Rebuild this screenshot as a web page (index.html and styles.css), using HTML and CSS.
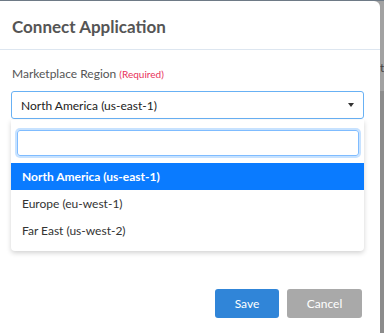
FILE: index.html
```html
<!DOCTYPE html>
<html lang="en">
<head>
    <meta charset="UTF-8">
    <meta name="viewport" content="width=device-width, initial-scale=1.0">
    <title>Connect Application</title>
    <link rel="stylesheet" href="styles.css">
</head>
<body>
    <div id="backdrop">
        <div class="backdrop-top"><span class="backdrop-text">t</span></div>
    </div>
    <div id="modal">
        <div class="modal-header">Connect Application</div>
        <div class="modal-body">
            <div class="field-label">Marketplace Region <span class="required">(Required)</span></div>
            <div class="select-wrap">
                <div class="select-box">
                    <span>North America (us-east-1)</span>
                    <span class="caret"></span>
                </div>
                <div class="dropdown">
                    <div class="search-box"></div>
                    <div class="option selected">North America (us-east-1)</div>
                    <div class="option">Europe (eu-west-1)</div>
                    <div class="option">Far East (us-west-2)</div>
                </div>
            </div>
        </div>
        <div class="modal-footer">
            <button class="btn btn-save">Save</button>
            <button class="btn btn-cancel">Cancel</button>
        </div>
    </div>
</body>
</html>
```

FILE: styles.css
```css
body {
    margin: 0;
    background-color: #8c8c8c;
    font-family: Lato, "Open Sans", sans-serif;
    width: 384px;
    height: 333px;
    overflow: hidden;
    position: relative;
}
#backdrop {
    position: absolute;
    top: 0;
    left: 0;
    width: 384px;
    height: 333px;
}
.backdrop-top {
    height: 90px;
    background-color: #a2a2a2;
    border-top: 1px solid #6e7a86;
}
.backdrop-text {
    position: absolute;
    left: 380px;
    top: 60px;
    font-size: 12px;
    color: #444;
}
#modal {
    position: relative;
    width: 380px;
    height: 332px;
    margin-top: 1px;
    background: white;
    border-top-right-radius: 6px;
}
.modal-header {
    height: 45px;
    line-height: 46px;
    padding: 3px 0 0 12px;
    font-size: 17px;
    font-weight: bold;
    color: #555;
    border-bottom: 1px solid #dde6f0;
}
.modal-body {
    padding: 16px 16px 0 11px;
}
.field-label {
    font-size: 12px;
    line-height: 16px;
    color: #555;
    padding-left: 1px;
    margin-bottom: 9px;
}
.required {
    font-size: 10px;
    color: #e8325a;
}
.select-wrap {
    position: relative;
}
.select-box {
    display: flex;
    justify-content: space-between;
    align-items: center;
    height: 26px;
    padding: 0 9px 0 9px;
    border: 1px solid #68b1f4;
    border-radius: 3px;
    font-size: 12px;
    color: #222;
}
.caret {
    width: 0;
    height: 0;
    border-left: 3px solid transparent;
    border-right: 3px solid transparent;
    border-top: 4px solid #333;
}
.dropdown {
    position: absolute;
    top: 29px;
    left: 0;
    right: 0;
    padding: 10px 0 7px 0;
    background: white;
    border-radius: 0 0 4px 4px;
    box-shadow: 0 2px 5px rgba(0, 0, 0, 0.18);
    z-index: 2;
}
.search-box {
    height: 24px;
    margin: 0 5px 7px 6px;
    border: 1px solid #7fbcff;
    border-radius: 3px;
    box-shadow: 0 0 0 2px rgba(0, 123, 255, 0.22);
}
.option {
    height: 27px;
    line-height: 28px;
    padding-left: 11px;
    font-size: 12px;
    color: #333;
}
.option.selected {
    background-color: #0a7bff;
    color: white;
    font-weight: bold;
}
.modal-footer {
    display: flex;
    justify-content: flex-end;
    gap: 8px;
    padding-right: 18px;
    margin-top: 170px;
}
.btn {
    height: 29px;
    border: none;
    border-radius: 3px;
    font-family: Lato, "Open Sans", sans-serif;
    font-size: 12px;
    color: white;
    cursor: pointer;
}
.btn-save {
    width: 64px;
    background-color: #3085d8;
}
.btn-cancel {
    width: 75px;
    background-color: #a9a9a9;
}
```
